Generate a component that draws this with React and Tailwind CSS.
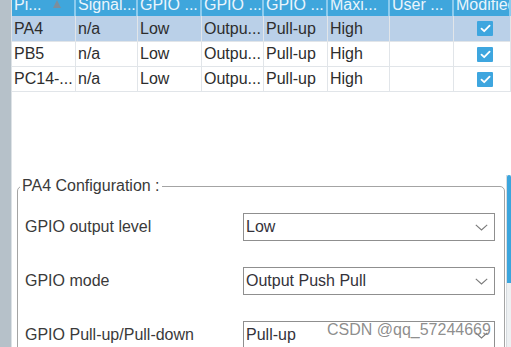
import React from 'react';

const cols = ['Pi...', 'Signal...', 'GPIO ...', 'GPIO ...', 'GPIO ...', 'Maxi...', 'User ...', 'Modified'];
const widths = ['w-[64px]', 'w-[62px]', 'w-[64px]', 'w-[62px]', 'w-[64px]', 'w-[62px]', 'w-[64px]', 'flex-1'];

const rows = [
  { pin: 'PA4', h: 'h-[26px]', selected: true },
  { pin: 'PB5', h: 'h-[25px]', selected: false },
  { pin: 'PC14-...', h: 'h-[25px]', selected: false },
];

function Check() {
  return (
    <div className="w-[16px] h-[15px] bg-[#3ea6df] rounded-[1px] flex items-center justify-center">
      <svg width="11" height="9" viewBox="0 0 11 9" fill="none">
        <path d="M1.5 4.6 L4.2 7.2 L9.6 1.6" stroke="white" strokeWidth="1.8" strokeLinecap="round" strokeLinejoin="round" />
      </svg>
    </div>
  );
}

function Chevron() {
  return (
    <svg width="13" height="7" viewBox="0 0 13 7" fill="none">
      <path d="M0.8 0.8 L6.5 6 L12.2 0.8" stroke="#7a7a7a" strokeWidth="1.1" />
    </svg>
  );
}

function Select({ value }) {
  return (
    <div className="w-[252px] h-[28px] border border-[#8f8f8f] bg-white flex items-center justify-between pl-[2px] pr-[6px] text-[16px] text-[#34323a]">
      <span>{value}</span>
      <Chevron />
    </div>
  );
}

export default function App() {
  const cell = 'border-r border-b border-[#e1e5e9] flex items-center pl-[2px] overflow-hidden whitespace-nowrap';

  return (
    <div className="relative w-[511px] h-[347px] overflow-hidden flex bg-white text-[#2d2d2d] text-[16px]" style={{ fontFamily: '"Liberation Sans", Arial, sans-serif' }}>
      {/* left gutter */}
      <div className="w-[11px] bg-[#b6c1c9] shrink-0"></div>

      <div className="flex-1 flex flex-col border-l border-[#dde2e6] min-w-0">
        {/* pin table */}
        <div className="h-[175px] flex flex-col shrink-0">
          <div className="flex h-[16px] bg-[#3fa6dc] text-[#eaf5fc] overflow-hidden">
            {cols.map((c, i) => (
              <div key={i} className={`${widths[i]} shrink-0 h-[16px] border-r-2 border-[#8ccbee] pl-[2px] flex overflow-hidden whitespace-nowrap`}>
                <span className="block leading-[16px] mt-[-3px]">{c}</span>
                {i === 0 && (
                  <svg className="ml-[11px]" width="8" height="9" viewBox="0 0 8 9">
                    <path d="M0 8 L4 0 L8 8 Z" fill="#7d8e9c" />
                  </svg>
                )}
              </div>
            ))}
          </div>
          {rows.map((r) => (
            <div key={r.pin} className={`flex ${r.h} ${r.selected ? 'bg-[#bad0e8]' : 'bg-white'}`}>
              <div className={`${widths[0]} ${cell}`}>{r.pin}</div>
              <div className={`${widths[1]} ${cell}`}>n/a</div>
              <div className={`${widths[2]} ${cell}`}>Low</div>
              <div className={`${widths[3]} ${cell}`}>Outpu...</div>
              <div className={`${widths[4]} ${cell}`}>Pull-up</div>
              <div className={`${widths[5]} ${cell}`}>High</div>
              <div className={`${widths[6]} ${cell}`}></div>
              <div className={`flex-1 ${cell} pl-[23px]`}>
                <Check />
              </div>
            </div>
          ))}
        </div>

        {/* configuration pane */}
        <div className="flex-1 flex min-h-0">
          <div className="flex-1 pl-[5px] pt-[2px] min-w-0">
            <fieldset className="border border-[#a4a4a4] rounded-[5px] pl-[7px] pr-[9px] pb-[20px] w-[488px]">
              <legend className="ml-[-5px] px-[2px] text-[16px] leading-[18px] text-[#3a3a3a]">PA4 Configuration :</legend>
              <div className="flex flex-col gap-[26px] pt-[18px] text-[#3a3a3a]">
                <div className="flex items-center justify-between">
                  <span>GPIO output level</span>
                  <Select value="Low" />
                </div>
                <div className="flex items-center justify-between">
                  <span>GPIO mode</span>
                  <Select value="Output Push Pull" />
                </div>
                <div className="flex items-center justify-between">
                  <span>GPIO Pull-up/Pull-down</span>
                  <Select value="Pull-up" />
                </div>
              </div>
            </fieldset>
          </div>
          {/* scrollbar */}
          <div className="w-[5px] shrink-0 border-l border-[#d6dbdf] bg-[#edf0f2] flex flex-col">
            <div className="h-[108px] bg-[#3ba5dd] rounded-t-[3px]"></div>
          </div>
        </div>
      </div>

      {/* watermark */}
      <div className="absolute left-[327px] top-[321px] text-[16px] leading-[18px] text-[#808080]/90 whitespace-nowrap">
        CSDN @qq_57244669
      </div>
    </div>
  );
}
